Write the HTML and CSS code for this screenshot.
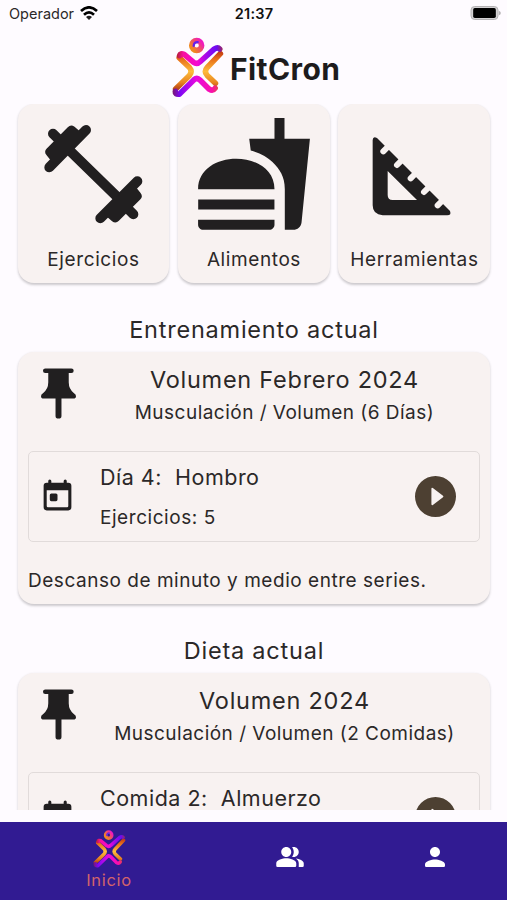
FILE: index.html
```html
<!DOCTYPE html>
<html lang="es">
<head>
<meta charset="utf-8">
<title>FitCron</title>
<link rel="stylesheet" href="styles.css">
</head>
<body>
<svg class="defs" width="0" height="0" aria-hidden="true">
  <defs>
    <linearGradient id="gTop" gradientUnits="userSpaceOnUse" x1="50" y1="0" x2="192" y2="0">
      <stop offset="0" stop-color="#b02030"/><stop offset=".14" stop-color="#f810a0"/><stop offset=".45" stop-color="#f408d2"/><stop offset=".62" stop-color="#a808e8"/><stop offset=".85" stop-color="#6a0cf4"/><stop offset="1" stop-color="#a02a50"/>
    </linearGradient>
    <linearGradient id="gBottom" gradientUnits="userSpaceOnUse" x1="38" y1="0" x2="180" y2="0">
      <stop offset="0" stop-color="#7a1870"/><stop offset=".15" stop-color="#7a08f4"/><stop offset=".5" stop-color="#e808e0"/><stop offset=".85" stop-color="#fa10a8"/><stop offset="1" stop-color="#e04a40"/>
    </linearGradient>
    <linearGradient id="gSide" gradientUnits="userSpaceOnUse" x1="0" y1="60" x2="0" y2="192">
      <stop offset="0" stop-color="#b82a10"/><stop offset=".22" stop-color="#e8701a"/><stop offset=".5" stop-color="#fdbc3c"/><stop offset=".75" stop-color="#e88420"/><stop offset="1" stop-color="#982010"/>
    </linearGradient>
    <linearGradient id="gHead" gradientUnits="userSpaceOnUse" x1="126" y1="36" x2="98" y2="58">
      <stop offset="0" stop-color="#f018c0"/><stop offset=".4" stop-color="#f04870"/><stop offset="1" stop-color="#f08a20"/>
    </linearGradient>
    <symbol id="logo" viewBox="36 22 158 184">
      <g fill="none" stroke-width="17" stroke-linecap="round" stroke-linejoin="round">
        <path stroke="url(#gSide)" d="M58 84L89 114Q99 126 89 138L47 179"/>
        <path stroke="url(#gSide)" d="M183 72L143 114Q132 126 143 138L168 162"/>
        <path stroke="url(#gTop)" d="M59 78Q61 70 73 74L101 98Q112 106 123 95L164 58Q175 51 181 58"/>
        <path stroke="url(#gBottom)" d="M46 186Q45 197 58 195L103 151Q112 143 121 152L149 180Q160 187 167 177"/>
        <circle cx="111" cy="47" r="15" stroke="url(#gHead)"/>
        <path stroke="#6420ee" stroke-width="7" d="M102 48Q103 36 114 37"/>
      </g>
    </symbol>
    <symbol id="pin" viewBox="92 177 106 152">
      <path d="M105 177H184a7 7 0 0 1 0 14H176V219Q176 240 192 252Q198 255 198 261Q198 268 190 268H154V321Q154 329 145 329Q136 329 136 321V268H100Q92 268 92 261Q92 255 98 252Q114 240 114 219V191H105a7 7 0 0 1 0-14z"/>
    </symbol>
    <symbol id="today" viewBox="0 0 24 24">
      <path fill-rule="evenodd" d="M19 3h-1V2a1 1 0 0 0-2 0v1H8V2a1 1 0 0 0-2 0v1H5a2 2 0 0 0-2 2v14a2 2 0 0 0 2 2h14a2 2 0 0 0 2-2V5a2 2 0 0 0-2-2zM19 18.200Q19 19 18.200 19H5.800Q5 19 5 18.200V8h14zM8 10h3a1 1 0 0 1 1 1v3a1 1 0 0 1-1 1H8a1 1 0 0 1-1-1v-3a1 1 0 0 1 1-1z"/>
    </symbol>
    <symbol id="play" viewBox="2 2 20 20">
      <path fill-rule="evenodd" d="M12 2a10 10 0 1 0 0 20 10 10 0 0 0 0-20zM10 8.300Q10 7.500 10.700 7.900L15.500 11.500Q16.200 12 15.500 12.500L10.700 16.100Q10 16.500 10 15.700z"/>
    </symbol>
  </defs>
</svg>

<div class="status">
  <div class="carrier"><span>Operador</span>
    <svg class="wifi" viewBox="0 0 54 42"><g fill="none" stroke="#000" stroke-width="8"><path d="M3 15Q27-7 51 15"/><path d="M12 26Q27 12 42 26"/></g><path d="M27 42L18 33Q27 25 36 33z"/></svg>
  </div>
  <div class="clock">21:37</div>
  <svg class="battery" viewBox="0 0 90 42"><rect x="1.500" y="1.500" width="81" height="39" rx="11" fill="#d4d2d4" stroke="#b4b2b4" stroke-width="3"/><rect x="8" y="6" width="68" height="30" rx="5" fill="#000"/><path d="M85 14Q91 16 91 21T85 28z" fill="#b4b2b4"/></svg>
</div>

<header class="brand">
  <svg class="brand-logo"><use href="#logo"/></svg>
  <h1>FitCron</h1>
</header>

<main class="content">
  <section class="tiles">
    <div class="card tile">
      <svg class="tile-icon" viewBox="66 54 366 366">
        <g class="dumbbell">
          <path d="M170 158L330 314"/>
          <path d="M118 217L228 105M129 116L145 132"/>
          <path d="M121 171L184 107L203 123L137 191z"/>
          <path d="M271 370L382 259M370 358L352 340"/>
          <path d="M380 303L316 367L297 351L364 283z"/>
        </g>
      </svg>
      <span>Ejercicios</span>
    </div>
    <div class="card tile">
      <svg class="tile-icon" viewBox="0 0 24 24"><path d="M18.060 22.990h1.660c.84 0 1.530-.64 1.630-1.460L23 5.050h-5V1h-1.970v4.050h-4.970l.3 2.340c1.710.47 3.310 1.320 4.270 2.260 1.440 1.420 2.430 2.890 2.430 5.290v8.050zM1 21.990V21h15.030v.99c0 .55-.45 1-1.010 1H2.010c-.56 0-1.010-.45-1.010-1zm15.030-7c0-8-15.030-8-15.030 0h15.030zM1.020 17h15v2h-15z"/></svg>
      <span>Alimentos</span>
    </div>
    <div class="card tile">
      <svg class="tile-icon" viewBox="66 54 366 366">
        <path fill-rule="evenodd" d="M125 135Q126 122 138 129L357 348Q362 361 349 361H155Q125 359 125 331zM170 228V300Q170 315 185 315H258z"/>
        <path class="notches" d="M157 169L176 150M198 210L217 191M239 250L258 231M279 291L298 272M320 331L339 312"/>
      </svg>
      <span>Herramientas</span>
    </div>
  </section>

  <h2>Entrenamiento actual</h2>
  <section class="card plan">
    <div class="plan-head">
      <svg class="pin"><use href="#pin"/></svg>
      <div class="plan-titles">
        <div class="plan-name">Volumen Febrero 2024</div>
        <div class="plan-kind">Musculación / Volumen (6 Días)</div>
      </div>
    </div>
    <div class="entry">
      <svg class="today"><use href="#today"/></svg>
      <div class="entry-text">
        <div class="entry-name">Día 4:&nbsp; Hombro</div>
        <div class="entry-info">Ejercicios: 5</div>
      </div>
      <svg class="play"><use href="#play"/></svg>
    </div>
    <p class="note">Descanso de minuto y medio entre series.</p>
  </section>

  <h2>Dieta actual</h2>
  <section class="card plan">
    <div class="plan-head">
      <svg class="pin"><use href="#pin"/></svg>
      <div class="plan-titles">
        <div class="plan-name">Volumen 2024</div>
        <div class="plan-kind">Musculación / Volumen (2 Comidas)</div>
      </div>
    </div>
    <div class="entry">
      <svg class="today"><use href="#today"/></svg>
      <div class="entry-text">
        <div class="entry-name">Comida 2:&nbsp; Almuerzo</div>
      </div>
      <svg class="play"><use href="#play"/></svg>
    </div>
  </section>
</main>

<nav class="tabs">
  <div class="tab tab-active">
    <svg class="tab-logo"><use href="#logo"/></svg>
    <span>Inicio</span>
  </div>
  <div class="tab"><svg class="tab-icon" viewBox="0 0 24 24"><path d="M16.670 13.130C18.040 14.060 19 15.320 19 17v3h3q1 0 1-1v-2c0-2.180-3.570-3.470-6.330-3.870zM15 12c2.210 0 4-1.790 4-4s-1.790-4-4-4c-.47 0-.91.1-1.330.24C14.500 5.270 15 6.580 15 8s-.5 2.730-1.330 3.760c.42.14.86.24 1.330.24zM9 12c2.210 0 4-1.790 4-4s-1.790-4-4-4-4 1.790-4 4 1.790 4 4 4zM9 13c-2.670 0-8 1.340-8 4v2q0 1 1 1h14q1 0 1-1v-2c0-2.660-5.330-4-8-4z"/></svg></div>
  <div class="tab"><svg class="tab-icon" viewBox="0 0 24 24"><path d="M12 12c2.210 0 4-1.790 4-4s-1.790-4-4-4-4 1.790-4 4 1.790 4 4 4zm0 2c-2.670 0-8 1.340-8 4v1q0 1 1 1h14q1 0 1-1v-1c0-2.660-5.330-4-8-4z"/></svg></div>
</nav>
</body>
</html>
```
FILE: styles.css
```css
* { box-sizing: border-box; }

body {
  margin: 0;
  width: 507px;
  height: 900px;
  overflow: hidden;
  display: flex;
  flex-direction: column;
  background: #fefbff;
  color: #2b2828;
  font-family: Inter, "Liberation Sans", sans-serif;
  white-space: nowrap;
}

h1, h2, p { margin: 0; font-weight: 400; }
svg { display: block; flex: none; fill: #211f20; }
.defs { position: absolute; }

.status {
  height: 27px;
  display: grid;
  grid-template-columns: 1fr auto 1fr;
  align-items: center;
  padding: 0 6px 0 9px;
  font-size: 14.5px;
}
.carrier { display: flex; align-items: center; gap: 6px; }
.wifi { width: 18px; height: 14px; margin-top: -1px; }
.clock { font-weight: 600; color: #111; letter-spacing: 0.2px; margin-left: -2px; }
.battery { width: 31px; height: 14px; justify-self: end; margin-top: -1px; }

.brand { height: 76.5px; display: flex; padding: 10px 0 0 172px; gap: 6px; }
.brand-logo { width: 52px; height: 61px; }
.brand h1 {
  font-size: 30px;
  font-weight: 650;
  line-height: 64px;
  letter-spacing: 0.4px;
  color: #1d1b1c;
}

.content { height: 706px; overflow: hidden; padding: 0 16.6px 0 17.5px; }

.card {
  background: #f8f2f1;
  border-radius: 16px;
  box-shadow: 0 1.5px 2.5px rgba(0, 0, 0, 0.2);
}

.tiles { display: grid; grid-template-columns: repeat(3, 1fr); gap: 8.5px; }
.tile {
  height: 179.5px;
  display: flex;
  flex-direction: column;
  align-items: center;
  padding-top: 9.5px;
  font-size: 19px;
  letter-spacing: 0.6px;
}
.tile-icon { width: 122px; height: 122px; }
.tile span { line-height: 49px; }
.dumbbell { fill: #211f20; stroke: #211f20; stroke-width: 30; stroke-linecap: round; stroke-linejoin: round; }
.notches { fill: none; stroke: #f8f2f1; stroke-width: 18; stroke-linecap: round; }

h2 {
  height: 69px;
  line-height: 93px;
  font-size: 23.5px;
  letter-spacing: 0.78px;
  text-align: center;
}

.plan { height: 252.3px; padding: 11px 10.5px; }
.plan-head { display: flex; height: 87.5px; }
.plan-titles { flex: 1; text-align: center; }
.pin { width: 35px; height: 51px; margin: 5px 13px; }
.plan-name { font-size: 23.5px; line-height: 34px; letter-spacing: 0.75px; }
.plan-kind { font-size: 19px; line-height: 31px; letter-spacing: 0.48px; }

.entry { height: 91.5px; display: flex; border: 1px solid #e1dbda; border-radius: 5px; }
.today { width: 37px; height: 37px; margin: 26px 24px 0 10px; }
.entry-text { flex: 1; padding-top: 8px; }
.entry-name { font-size: 21.5px; line-height: 34px; letter-spacing: 0.5px; }
.entry-info { margin-top: 9px; font-size: 19px; line-height: 30px; letter-spacing: 0.55px; }
.play { width: 41px; height: 41px; margin: 24px 23px 0 0; fill: #4d4032; }
.note { margin-top: 24px; font-size: 19px; line-height: 30px; letter-spacing: 0.53px; }

.tabs {
  height: 78.5px;
  margin-top: auto;
  background: #311b92;
  display: grid;
  grid-template-columns: 218px 1fr 1fr;
  font-size: 16.5px;
  letter-spacing: 0.7px;
  color: #d2636b;
}
.tab { display: flex; flex-direction: column; align-items: center; padding-top: 20.5px; }
.tab-active { padding-top: 8px; }
.tab-active span { line-height: 24px; }
.tab-logo { width: 33px; height: 38px; }
.tab-icon { width: 30px; height: 30px; fill: #fff; }
```
